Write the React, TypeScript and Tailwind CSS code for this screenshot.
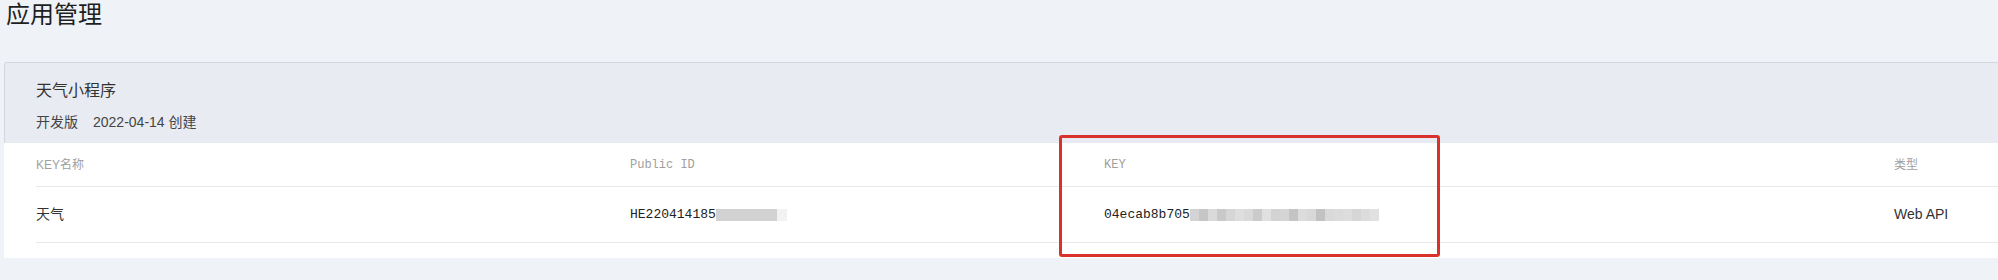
import React from 'react';

const keyBlur = ['#d4d4d4', '#c6c6c6', '#dadada', '#c9c9c9', '#d6d6d6', '#dedede', '#d9d9d9', '#cbcbcb', '#e0e0e0', '#d3d3d3', '#d5d5d5', '#c4c4c4', '#dcdcdc', '#d8d8d8', '#c2c2c2', '#d9d9d9', '#dbdbdb', '#dddddd', '#d6d6d6', '#dcdcdc', '#e1e1e1'];

const sans = "font-['Microsoft_YaHei','Liberation_Sans','Noto_Sans_CJK_SC',sans-serif]";
const mono = "font-['Liberation_Mono','Courier_New',monospace]";

export default function App() {
  return (
    <div className={`w-[1998px] h-[280px] overflow-hidden bg-[#eff2f6] pl-1 ${sans}`}>
      <h1 className="h-[62px] pl-[2px] pt-[1px] text-[24px] leading-[28px] text-[#1f1f1f] font-normal">应用管理</h1>

      <div className="relative w-[2010px]">
        <div className="border border-[#d3d8df] border-b-0 rounded-t-[3px] bg-[#e8ecf2] h-[81px] pl-[31px] pt-[18px]">
          <div className="text-[16px] leading-[20px] text-[#333]">天气小程序</div>
          <div className="mt-[13px] text-[14px] leading-[16px] text-[#444] flex">
            <span>开发版</span>
            <span className="ml-[15px]">2022-04-14 创建</span>
          </div>
        </div>

        <div className="bg-white pl-[32px] pb-[15px]">
          <div className="grid grid-cols-[594px_474px_790px_1fr] h-[44px] items-center border-b border-[#e8e8e8] text-[12px] text-[#a0a0a0]">
            <div>KEY名称</div>
            <div className={mono}>Public ID</div>
            <div className={mono}>KEY</div>
            <div>类型</div>
          </div>
          <div className="grid grid-cols-[594px_474px_790px_1fr] h-[56px] items-center border-b border-[#e8e8e8] text-[14px] text-[#333]">
            <div>天气</div>
            <div className="flex items-center">
              <span className={`${mono} text-[13px] text-[#222]`}>HE220414185</span>
              <span className="w-[61px] h-[12px] bg-[#d2d2d2]" />
              <span className="w-[10px] h-[12px] bg-[#f2f2f2]" />
            </div>
            <div className="flex items-center">
              <span className={`${mono} text-[13px] text-[#222]`}>04ecab8b705</span>
              <span className="flex h-[12px]">
                {keyBlur.map((c, i) => (
                  <span key={i} className="w-[9px] h-full" style={{ background: c }} />
                ))}
              </span>
            </div>
            <div>Web API</div>
          </div>
        </div>

        <div className="absolute left-[1055px] top-[73px] w-[381px] h-[122px] border-[3px] border-[#d8322a] rounded-[3px]" />
      </div>
    </div>
  );
}
